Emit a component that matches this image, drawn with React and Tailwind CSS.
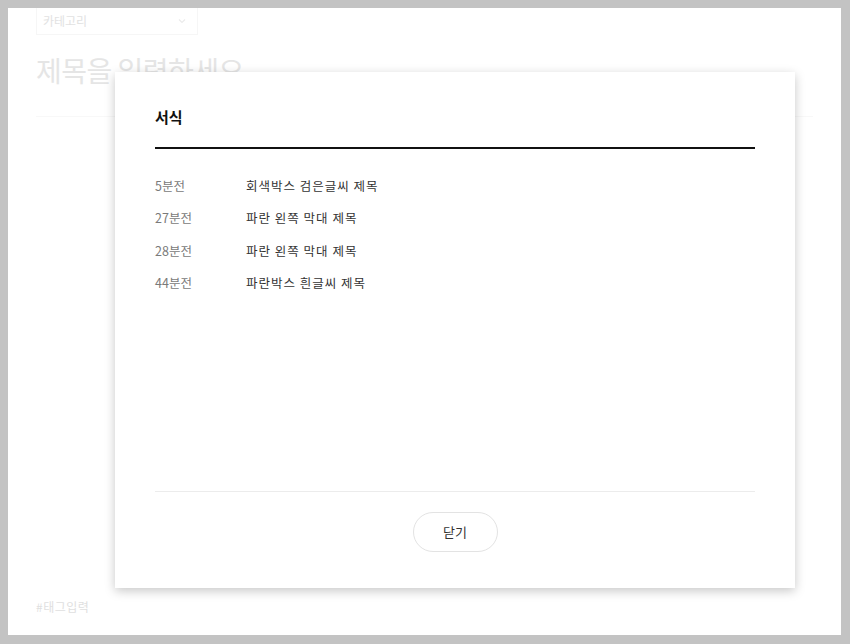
import React from "react";

const rows = [
  { time: "5분전", title: "회색박스 검은글씨 제목" },
  { time: "27분전", title: "파란 왼쪽 막대 제목" },
  { time: "28분전", title: "파란 왼쪽 막대 제목" },
  { time: "44분전", title: "파란박스 흰글씨 제목" },
];

const App = () => {
  return (
    <div
      className="w-full h-[644px] bg-[#c3c3c3] pt-[8px] pl-[8px] pr-[9px] pb-[9px]"
      style={{ fontFamily: '"Noto Sans CJK KR", "Noto Sans", sans-serif' }}
    >
      <div className="relative w-full h-full bg-white overflow-hidden">
        {/* Editor behind the modal */}
        <div className="px-[28px]">
          <div className="-mt-[2px] w-[162px] h-[29px] border border-[#f6f6f6] flex items-center justify-between px-[6px]">
            <span className="text-[12px] text-[#e2e2e2]">카테고리</span>
            <svg className="w-[10px] h-[10px] mr-[4px]" viewBox="0 0 10 10" fill="none">
              <path d="M2 3.5 L5 6.5 L8 3.5" stroke="#ebebeb" strokeWidth="1.2" />
            </svg>
          </div>
          <div className="mt-[15px] text-[28px] leading-[40px] text-[#e5e5e5] tracking-[-0.5px]">
            제목을 입력하세요
          </div>
        </div>
        <div className="mt-[26px] mx-[28px] border-t border-[#f8f8f8]" />
        <div className="absolute left-[28px] bottom-[19px] text-[12px] text-[#e0e0e0] tracking-[0.5px]">
          #태그입력
        </div>

        {/* Modal */}
        <div className="absolute left-[107px] top-[64px] w-[680px] h-[516px] bg-white shadow-[0_3px_10px_rgba(0,0,0,0.22)] flex flex-col px-[40px]">
          <div className="pt-[34px] text-[15px] leading-[22px] font-bold text-[#111]">
            서식
          </div>
          <div className="mt-[19px] border-t-2 border-[#111]" />
          <ul className="mt-[21px] flex-1">
            {rows.map((row, i) => (
              <li key={i} className="h-[32.5px] flex items-center text-[12.5px]">
                <span className="w-[91px] text-[#7a7a7a]">{row.time}</span>
                <span className="text-[#333] tracking-[1px]">{row.title}</span>
              </li>
            ))}
          </ul>
          <div className="border-t border-[#ececec]" />
          <div className="flex justify-center pt-[20px] pb-[36px]">
            <button className="w-[85px] h-[40px] rounded-full border border-[#e3e3e3] bg-white text-[13px] text-[#333]">
              닫기
            </button>
          </div>
        </div>
      </div>
    </div>
  );
};

export default App;
